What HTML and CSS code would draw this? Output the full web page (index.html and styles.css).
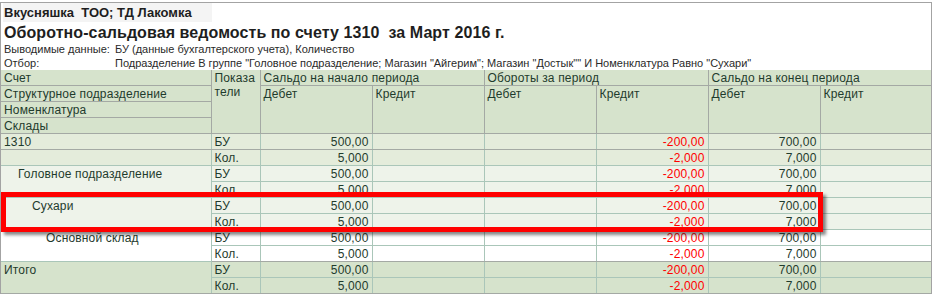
FILE: index.html
```html
<!DOCTYPE html>
<html lang="ru">
<head>
<meta charset="utf-8">
<title>Оборотно-сальдовая ведомость по счету 1310</title>
<link rel="stylesheet" href="styles.css">
</head>
<body>
<div class="sheet">
  <div class="org">Вкусняшка&nbsp; ТОО; ТД Лакомка</div>
  <h1 class="title">Оборотно-сальдовая ведомость по счету 1310&nbsp; за Март 2016 г.</h1>
  <div class="info">
    <span class="info-label">Выводимые данные:</span>
    <span class="info-value">БУ (данные бухгалтерского учета), Количество</span>
  </div>
  <div class="info">
    <span class="info-label">Отбор:</span>
    <span class="info-value">Подразделение В группе "Головное подразделение; Магазин "Айгерим"; Магазин "Достык"" И Номенклатура Равно "Сухари"</span>
  </div>
  <div class="table-wrap">
    <table class="report">
      <colgroup>
        <col class="c-name"><col class="c-ind">
        <col class="c-num"><col class="c-num"><col class="c-num"><col class="c-num"><col class="c-num"><col class="c-last">
      </colgroup>
      <thead>
        <tr>
          <th class="hl">Счет</th>
          <th rowspan="4">Показа<wbr>тели</th>
          <th colspan="2">Сальдо на начало периода</th>
          <th colspan="2">Обороты за период</th>
          <th colspan="2">Сальдо на конец периода</th>
        </tr>
        <tr>
          <th class="hl">Структурное подразделение</th>
          <th rowspan="3">Дебет</th><th rowspan="3">Кредит</th>
          <th rowspan="3">Дебет</th><th rowspan="3">Кредит</th>
          <th rowspan="3">Дебет</th><th rowspan="3">Кредит</th>
        </tr>
        <tr><th class="hl">Номенклатура</th></tr>
        <tr><th class="hl">Склады</th></tr>
      </thead>
      <tbody>
        <tr class="lv0 split">
          <td class="name">1310</td><td>БУ</td><td class="n">500,00</td><td></td><td></td><td class="n neg">-200,00</td><td class="n">700,00</td><td></td>
        </tr>
        <tr class="lv0">
          <td class="name"></td><td>Кол.</td><td class="n">5,000</td><td></td><td></td><td class="n neg">-2,000</td><td class="n">7,000</td><td></td>
        </tr>
        <tr class="lv1">
          <td class="name ind1" rowspan="2">Головное подразделение</td><td>БУ</td><td class="n">500,00</td><td></td><td></td><td class="n neg">-200,00</td><td class="n">700,00</td><td></td>
        </tr>
        <tr class="lv1">
          <td>Кол.</td><td class="n">5,000</td><td></td><td></td><td class="n neg">-2,000</td><td class="n">7,000</td><td></td>
        </tr>
        <tr class="lv1">
          <td class="name ind2" rowspan="2">Сухари</td><td>БУ</td><td class="n">500,00</td><td></td><td></td><td class="n neg">-200,00</td><td class="n">700,00</td><td></td>
        </tr>
        <tr class="lv1">
          <td>Кол.</td><td class="n">5,000</td><td></td><td></td><td class="n neg">-2,000</td><td class="n">7,000</td><td></td>
        </tr>
        <tr class="lv3">
          <td class="name ind3" rowspan="2">Основной склад</td><td>БУ</td><td class="n">500,00</td><td></td><td></td><td class="n neg">-200,00</td><td class="n">700,00</td><td></td>
        </tr>
        <tr class="lv3 before-total">
          <td>Кол.</td><td class="n">5,000</td><td></td><td></td><td class="n neg">-2,000</td><td class="n">7,000</td><td></td>
        </tr>
        <tr class="total">
          <td class="name" rowspan="2">Итого</td><td>БУ</td><td class="n">500,00</td><td></td><td></td><td class="n neg">-200,00</td><td class="n">700,00</td><td></td>
        </tr>
        <tr class="total">
          <td>Кол.</td><td class="n">5,000</td><td></td><td></td><td class="n neg">-2,000</td><td class="n">7,000</td><td></td>
        </tr>
      </tbody>
    </table>
    <div class="highlight"></div>
  </div>
</div>
</body>
</html>
```

FILE: styles.css
```css
html, body {
  margin: 0;
  padding: 0;
  background: #ffffff;
}

body {
  font-family: "Liberation Sans", Arial, sans-serif;
  color: #213a2e;
}

.sheet {
  margin-top: 2px;
  width: 932px;
  box-sizing: border-box;
  border-top: 1px solid #a3a3a3;
  border-left: 1px solid #a3a3a3;
  border-right: 1px solid #a3a3a3;
}

.org {
  width: 209px;
  height: 19px;
  margin-left: 2px;
  padding-left: 1px;
  box-sizing: border-box;
  background: #f4f4f4;
  font-weight: bold;
  font-size: 13px;
  line-height: 19px;
  color: #1e1e1e;
}

.title {
  margin: 0;
  padding-left: 3px;
  height: 20px;
  font-size: 16px;
  letter-spacing: 0.08px;
  line-height: 21px;
  font-weight: bold;
  color: #1e1e1e;
}

.info {
  display: flex;
  height: 14px;
  font-size: 11px;
  line-height: 15px;
  color: #2a2a2a;
  padding-left: 3px;
}

.info-label {
  width: 111px;
  flex: none;
}

.table-wrap {
  position: relative;
}

.report {
  width: 930px;
  table-layout: fixed;
  border-collapse: collapse;
  font-size: 12px;
  letter-spacing: 0.16px;
}

.c-name { width: 210px; }
.c-ind { width: 49px; }
.c-num { width: 112px; }
.c-last { width: 111px; }

.report th,
.report td {
  padding: 1px 3px 0;
  line-height: 14px;
  vertical-align: top;
  text-align: left;
  font-weight: normal;
  white-space: nowrap;
  overflow: hidden;
  color: #1f3b2d;
}

.report th {
  background: #d6e3cc;
  border: 1px solid #a4a9a4;
  white-space: normal;
}

.report thead tr:first-child th { border-top: none; }
.report tr > :first-child { border-left: none; }
.report tr > :last-child { border-right: none; }
.report thead tr:nth-child(n+2) th.hl { border-left: none; }

.report td {
  border: 1px solid #aac6b9;
}

.report td.n {
  text-align: right;
}

.report td.neg {
  color: #ff0000;
}

.report td.ind1 { padding-left: 17px; }
.report td.ind2 { padding-left: 31px; }
.report td.ind3 { padding-left: 45px; }

.lv0 td { background: #e4ecdb; }
.lv1 td { background: #eef3ea; }
.lv3 td { background: #ffffff; }
.total td { background: #d6e3cc; }

.report tbody tr:first-child td { border-top: 1px solid #a4a9a4; }
.split td { border-bottom: 1px solid #a4aaa4; }
.before-total td,
.total td.name { border-bottom-color: #a4a9a4; }
.total td { border-top-color: #a4a9a4; }
.report tbody tr:last-child td { border-bottom: 1px solid #a4a9a4; }

.highlight {
  position: absolute;
  left: 0;
  top: 122px;
  width: 822px;
  height: 40px;
  box-sizing: border-box;
  border: 5px solid #ff0000;
  box-shadow: 3px 3px 3px rgba(40, 40, 40, 0.55);
  pointer-events: none;
}
```
